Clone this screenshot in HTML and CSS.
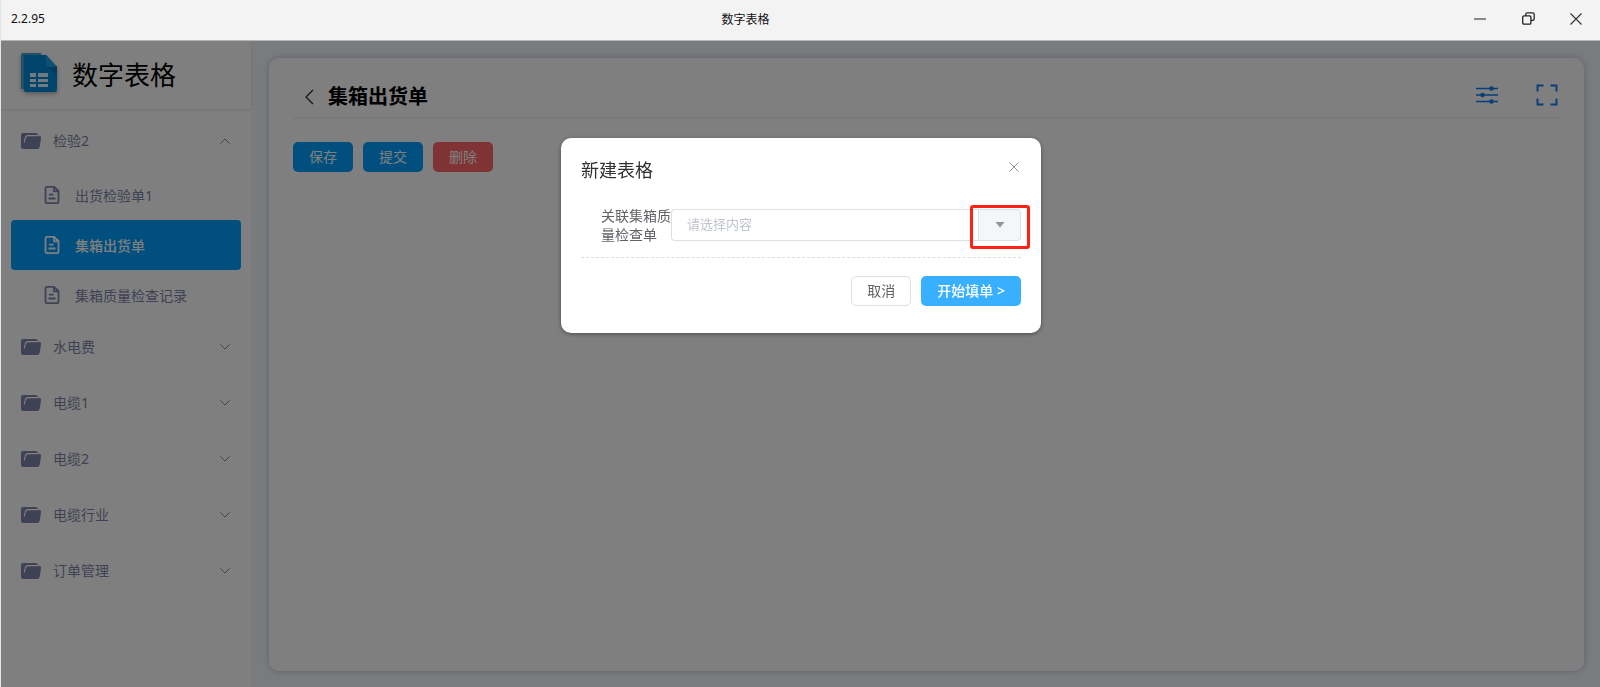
FILE: index.html
```html
<!DOCTYPE html>
<html lang="zh-CN">
	<head>
		<meta charset="utf-8">
		<title>数字表格</title>
		<link rel="stylesheet" href="styles.css">
	</head>
	<body>
		<svg class="defs" width="0" height="0">
			<symbol id="folder" viewBox="0 0 20 16">
				<path d="M2 0h12.500q2 0 2.500 2l1.500 1Q20.300 3.200 20 5L18.800 13.500Q18.400 16 16 16H2.500Q0 16 0 13.500V2Q0 0 2 0z" fill="currentColor"/>
				<path d="M3.200 9.500 4.300 5Q4.800 2.600 7 2.600H17.500" fill="none" stroke="#fff" stroke-width="1.100"/>
			</symbol>
			<symbol id="doc" viewBox="0 0 16 20">
				<path d="M3 1.800h7L14.500 6v10.500q0 1.700-1.700 1.700H3q-1.500 0-1.500-1.700V3.500q0-1.700 1.500-1.700zM10 2v4.300h4.500M5 9.700h4.500M4.500 13.500h7" fill="none" stroke="currentColor" stroke-width="1.800"/>
			</symbol>
			<symbol id="down" viewBox="0 0 10 6">
				<path d="M.5.5 5 5 9.500.5" fill="none" stroke="currentColor"/>
			</symbol>
		</svg>
		<div class="titlebar">
			<span class="version">2.2.95</span>
			<span class="app-name">数字表格</span>
			<div class="win-btns">
				<button type="button" aria-label="最小化"><svg width="12" height="12" viewBox="0 0 12 12"><path d="M0 6h12" stroke="#888" stroke-width="2"/></svg></button>
				<button type="button" aria-label="还原"><svg width="13" height="13" viewBox="0 0 13 13"><path d="M3.800 3.800V2.200Q3.800.8 5.200.8h5.400q1.600 0 1.600 1.600v4.400q0 1.600-1.600 1.600H9" fill="none" stroke="#222" stroke-width="1.300"/><rect x=".7" y="3.900" width="8.200" height="8.200" rx="1.200" fill="none" stroke="#222" stroke-width="1.300"/></svg></button>
				<button type="button" aria-label="关闭窗口"><svg width="12" height="12" viewBox="0 0 12 12"><path d="M.5.5l11 11M11.500.5l-11 11" stroke="#333" stroke-width="1.100"/></svg></button>
			</div>
		</div>
		<div class="app">
			<div class="sidebar">
				<div class="logo">
					<svg width="40" height="44" viewBox="0 0 40 44">
						<path d="M4 1h18v36H2V3q0-2 2-2z" fill="#4c9fcc"/>
						<path d="M7 3h20l11 12v23q0 2-2 2H7q-2 0-2-2V5q0-2 2-2z" fill="#008ad6"/>
						<path d="M27 14h11v9z" fill="#0077b8"/>
						<path d="M27 3l11 12H29q-2 0-2-2z" fill="#16a0e0"/>
						<path d="M11 21h6v4h-6zM19 21h10v4H19zM11 27h6v3h-6zM19 27h10v3H19zM11 32h6v3h-6zM19 32h10v3H19z" fill="#e8f4ff"/>
					</svg>
					<span>数字表格</span>
				</div>
				<ul class="menu">
					<li>
						<a href="#" class="menu-item"><svg class="folder"><use href="#folder"/></svg><span>检验2</span><svg class="arrow up"><use href="#down"/></svg></a>
						<ul class="submenu">
							<li><a href="#"><svg class="doc"><use href="#doc"/></svg>出货检验单1</a></li>
							<li><a href="#" class="active"><svg class="doc"><use href="#doc"/></svg>集箱出货单</a></li>
							<li><a href="#"><svg class="doc"><use href="#doc"/></svg>集箱质量检查记录</a></li>
						</ul>
					</li>
					<li><a href="#" class="menu-item"><svg class="folder"><use href="#folder"/></svg><span>水电费</span><svg class="arrow"><use href="#down"/></svg></a></li>
					<li><a href="#" class="menu-item"><svg class="folder"><use href="#folder"/></svg><span>电缆1</span><svg class="arrow"><use href="#down"/></svg></a></li>
					<li><a href="#" class="menu-item"><svg class="folder"><use href="#folder"/></svg><span>电缆2</span><svg class="arrow"><use href="#down"/></svg></a></li>
					<li><a href="#" class="menu-item"><svg class="folder"><use href="#folder"/></svg><span>电缆行业</span><svg class="arrow"><use href="#down"/></svg></a></li>
					<li><a href="#" class="menu-item"><svg class="folder"><use href="#folder"/></svg><span>订单管理</span><svg class="arrow"><use href="#down"/></svg></a></li>
				</ul>
			</div>
			<div class="main">
				<div class="card">
					<div class="card-head">
						<button type="button" class="icon-btn" aria-label="返回"><svg width="9" height="16" viewBox="0 0 9 16"><path d="M8 1 1 8l7 7" fill="none" stroke="#222" stroke-width="1.200"/></svg></button>
						<h1>集箱出货单</h1>
						<div class="tools">
							<button type="button" class="icon-btn" aria-label="设置"><svg width="22" height="18" viewBox="0 0 22 18"><path d="M0 2.500h22M0 9h22M0 15.500h22" stroke="#0a7cf0" stroke-width="1.600"/><g fill="#0a7cf0"><circle cx="15.500" cy="2.500" r="2.200"/><circle cx="6.500" cy="9" r="2.200"/><circle cx="15.500" cy="15.500" r="2.200"/></g></svg></button>
							<button type="button" class="icon-btn" aria-label="全屏"><svg width="22" height="22" viewBox="0 0 22 22"><path d="M1.500 7.500v-6h6M14.500 1.500h6v6M20.500 14.500v6h-6M7.500 20.500h-6v-6" fill="none" stroke="#0a7cf0" stroke-width="1.900"/></svg></button>
						</div>
					</div>
					<div class="btns">
						<button type="button" class="btn blue">保存</button>
						<button type="button" class="btn blue">提交</button>
						<button type="button" class="btn red">删除</button>
					</div>
				</div>
			</div>
			<div class="mask"></div>
		</div>
		<div class="dialog-wrap">
			<div class="dialog" role="dialog" aria-labelledby="dialog-title">
				<div class="dialog-head">
					<h2 id="dialog-title">新建表格</h2>
					<button type="button" class="icon-btn" aria-label="关闭"><svg width="10" height="10" viewBox="0 0 10 10"><path d="M.5.5l9 9M9.500.5l-9 9" stroke="#909399"/></svg></button>
				</div>
				<div class="form-item">
					<label for="relate">关联集箱质量检查单</label>
					<div class="input-group">
						<input type="text" id="relate" placeholder="请选择内容">
						<button type="button" class="append" aria-label="选择"><svg width="10" height="6" viewBox="0 0 10 6"><path d="M.5 0h9L5 5.500z" fill="#909399"/></svg></button>
						<div class="mark"></div>
					</div>
				</div>
				<div class="dialog-foot">
					<button type="button" class="btn plain">取消</button>
					<button type="button" class="btn primary">开始填单 &gt;</button>
				</div>
			</div>
		</div>
	</body>
</html>
```
FILE: styles.css
```css
*{margin: 0;padding: 0;box-sizing: border-box;}
ul,li{list-style: none;}
a{text-decoration: none;color: inherit;}
svg{display: block;flex: none;}
button,input{font-family: inherit;}
body{
	min-height: 100vh;
	display: flex;
	flex-direction: column;
	border-left: 1px solid #e2e4e6;
	font-family: "Noto Sans","Noto Sans CJK SC",sans-serif;
	font-size: 14px;
	color: #606266;
	overflow: hidden;
}
.defs{position: absolute;}

/* 标题栏 */
.titlebar{
	height: 41px;
	display: flex;
	align-items: center;
	padding-left: 10px;
	padding-bottom: 3px;
	background: #f3f3f3;
	border-bottom: 1px solid #b4b6b8;
	font-size: 12px;
	color: #111;
}
.app-name{flex: 1;text-align: center;padding-right: 10px;}
.win-btns{display: flex;}
.win-btns button{width: 48px;height: 36px;display: flex;align-items: center;justify-content: center;border: 0;background: none;}

.app{flex: 1;display: flex;position: relative;background: #f4f6fb;}
.mask{position: absolute;top: 0;right: 0;bottom: 0;left: 0;background: rgba(0,0,0,0.5);}

/* 左侧菜单 */
.sidebar{width: 250px;flex: none;background: #fff;}
.logo{
	height: 68px;
	display: flex;
	align-items: center;
	gap: 13px;
	padding: 0 0 2px 18px;
	font-size: 26px;
	color: #000;
	box-shadow: 0 1px 2px rgba(0,0,0,0.12);
}
.logo svg{filter: drop-shadow(0 2px 2px rgba(0,0,0,0.3));}
.menu{padding-top: 4px;color: #7f84a8;}
.menu-item{height: 56px;display: flex;align-items: center;gap: 12px;padding: 0 21px 0 20px;}
.menu-item span{flex: 1;padding-bottom: 2px;}
.folder{width: 20px;height: 16px;}
.arrow{width: 10px;height: 6px;color: #888;}
.up{transform: rotate(180deg);}
.submenu{margin-bottom: -1px;padding: 1px 10px 0;}
.submenu a{height: 50px;display: flex;align-items: center;gap: 15px;padding-left: 33px;border-radius: 4px;}
.submenu .active{background: #009eff;color: #fff;font-weight: 500;}
.doc{width: 16px;height: 20px;}

/* 内容区 */
.main{flex: 1;display: flex;padding: 17px 16px 16px 18px;}
.card{
	flex: 1;
	padding: 18px 24px;
	background: #fff;
	border-radius: 10px;
	box-shadow: 0 0 6px rgba(60,100,150,0.35);
}
.card-head{height: 43px;display: flex;align-items: center;padding-left: 12px;border-bottom: 2px solid #f2f2f2;}
.card-head h1{margin-left: 14px;font-size: 20px;line-height: 28px;color: #000;}
.icon-btn{border: 0;background: none;}
.tools{margin-left: auto;display: flex;align-items: center;gap: 38px;padding: 0 2px 4px 0;}
.btns{display: flex;gap: 10px;margin-top: 23px;}
.btn{height: 30px;padding: 0 16px;border: 0;border-radius: 5px;font-size: 14px;line-height: 20px;color: #fff;}
.blue{background: #009eff;}
.red{background: #ff6669;}
.primary{background: #38b0ff;font-weight: 500;}
.plain{border: 1px solid #dcdfe6;padding: 0 15px;background: #fff;color: #606266;}

/* 新建表格弹窗 */
.dialog-wrap{position: fixed;top: 138px;left: 2px;right: 0;display: flex;justify-content: center;}
.dialog{
	width: 480px;
	padding: 20px 20px 27px;
	background: #fff;
	border-radius: 10px;
	box-shadow: 0 1px 4px rgba(0,0,0,0.4);
}
.dialog-head{display: flex;justify-content: space-between;align-items: flex-start;}
.dialog-head h2{font-size: 18px;font-weight: 400;line-height: 24px;color: #303133;}
.dialog-head .icon-btn{padding: 4px 2px;}
.form-item{
	display: flex;
	align-items: center;
	margin-top: 24px;
	padding: 0 0 13px 20px;
	border-bottom: 1px dashed #dcdcdc;
}
.form-item label{width: 70px;line-height: 19px;}
.input-group{flex: 1;display: flex;position: relative;height: 32px;}
.input-group input{
	flex: 1;
	min-width: 0;
	padding: 0 15px 2px;
	border: 1px solid #dcdfe6;
	border-right: 0;
	border-radius: 4px 0 0 4px;
	font-size: 13px;
	color: #606266;
	outline: none;
}
.input-group input::placeholder{color: #c0c4cc;}
.append{
	width: 43px;
	display: flex;
	align-items: center;
	justify-content: center;
	border: 1px solid #dcdfe6;
	border-radius: 0 4px 4px 0;
	background: #f4f7fa;
}
.mark{position: absolute;top: -4px;right: -9px;width: 60px;height: 44px;border: 3px solid #ff2116;border-radius: 3px;pointer-events: none;}
.dialog-foot{display: flex;justify-content: flex-end;gap: 10px;margin-top: 18px;}
```
